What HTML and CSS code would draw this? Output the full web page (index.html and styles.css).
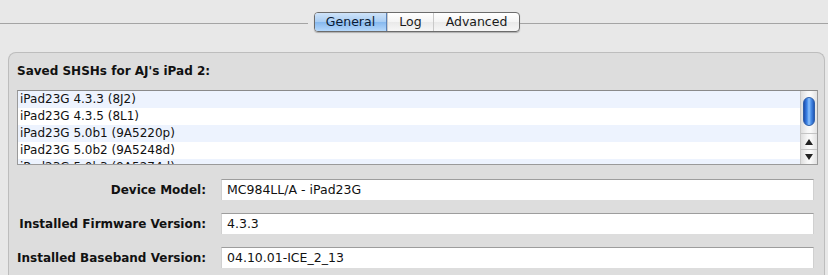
FILE: index.html
```html
<!DOCTYPE html>
<html>
<head>
<meta charset="utf-8">
<link rel="stylesheet" href="styles.css">
</head>
<body>
<div class="window">
  <div class="tabbar">
    <div class="rule"></div>
    <div class="tabs">
      <div class="tab tab-general active">General</div>
      <div class="tab tab-log">Log</div>
      <div class="tab tab-adv">Advanced</div>
    </div>
    <div class="rule"></div>
  </div>
  <div class="panel">
    <div class="title">Saved SHSHs for AJ's iPad 2:</div>
    <div class="list">
      <div class="rows">
        <div class="row odd">iPad23G 4.3.3 (8J2)</div>
        <div class="row">iPad23G 4.3.5 (8L1)</div>
        <div class="row odd">iPad23G 5.0b1 (9A5220p)</div>
        <div class="row">iPad23G 5.0b2 (9A5248d)</div>
        <div class="row odd">iPad23G 5.0b3 (9A5274d)</div>
      </div>
      <div class="scrollbar">
        <div class="track"><div class="thumb"></div></div>
        <div class="arrow up"><span class="tri-up"></span></div>
        <div class="arrow down"><span class="tri-down"></span></div>
      </div>
    </div>
    <div class="fields">
      <div class="label">Device Model:</div>
      <div class="field">MC984LL/A - iPad23G</div>
      <div class="label">Installed Firmware Version:</div>
      <div class="field">4.3.3</div>
      <div class="label">Installed Baseband Version:</div>
      <div class="field">04.10.01-ICE_2_13</div>
    </div>
  </div>
</div>
</body>
</html>
```

FILE: styles.css
```css
html, body {
  margin: 0;
  padding: 0;
  background: #e8e8e8;
  font-family: "DejaVu Sans", "Lucida Grande", sans-serif;
  color: #111;
  overflow: hidden;
}
.window {
  width: 828px;
  height: 275px;
  overflow: hidden;
}
.tabbar {
  display: flex;
  align-items: center;
  height: 20px;
  padding-top: 12px;
  padding-bottom: 20px;
}
.rule {
  flex: 1;
  height: 1px;
  background: #a4a4a4;
  margin-top: 3px;
}
.tabs {
  display: flex;
  height: 18px;
  border: 1px solid #6c6c6c;
  border-radius: 4px;
  background: linear-gradient(#ffffff, #f4f4f4 50%, #e9e9e9 51%, #f6f6f6);
  box-shadow: 0 1px 1px rgba(0,0,0,0.25);
  overflow: hidden;
  margin-left: 6px;
}
.tab {
  font-size: 12.5px;
  line-height: 18px;
  text-align: center;
  color: #1a1a1a;
  border-left: 1px solid #c9c9c9;
}
.tab-general { width: 71px; border-left: none; }
.tab-log { width: 45px; }
.tab-adv { width: 85px; }
.tab.active {
  background: linear-gradient(#cfe3f9, #a8cdf3 50%, #86b8ee 51%, #b5d8fb);
  color: #0a1a33;
  border-right: 1px solid #5a82b8;
}
.panel {
  margin-left: 8px;
  width: 801px;
  height: 212px;
  overflow: hidden;
  border: 1px solid #bdbdbd;
  border-bottom: none;
  border-radius: 8px 8px 0 0;
  background: #dddddd;
  padding: 10px 6px 0 8px;
}
.title {
  font-size: 12px;
  font-weight: bold;
  line-height: 16px;
  height: 16px;
  margin-bottom: 11px;
}
.list {
  display: flex;
  height: 73px;
  border: 1px solid #9a9a9a;
  border-top-color: #8a8a8a;
  background: #fff;
}
.rows {
  flex: 1;
  overflow: hidden;
}
.row {
  height: 17px;
  line-height: 17px;
  font-size: 12px;
  padding-left: 2px;
  white-space: nowrap;
  background: #ffffff;
}
.row.odd {
  background: #edf3fe;
}
.scrollbar {
  width: 16px;
  display: flex;
  flex-direction: column;
  border-left: 1px solid #c8c8c8;
  background: linear-gradient(90deg, #dedede, #f6f6f6 40%, #fafafa 60%, #e2e2e2);
}
.track {
  height: 38px;
  display: flex;
  justify-content: center;
  padding-top: 6px;
}
.thumb {
  width: 12px;
  height: 29px;
  border-radius: 6px;
  border: 1px solid #2f5fa8;
  box-sizing: border-box;
  background: linear-gradient(90deg, #1e4fb0, #3f86e8 30%, #8fc2fb 50%, #4a8fe9 70%, #2258b8);
}
.arrow {
  height: 15px;
  display: flex;
  align-items: center;
  justify-content: center;
  border-top: 1px solid #c4c4c4;
}
.tri-up {
  width: 0; height: 0;
  border-left: 4px solid transparent;
  border-right: 4px solid transparent;
  border-bottom: 6px solid #222;
}
.tri-down {
  width: 0; height: 0;
  border-left: 4px solid transparent;
  border-right: 4px solid transparent;
  border-top: 6px solid #222;
}
.fields {
  display: grid;
  grid-template-columns: 189px 593px;
  column-gap: 15px;
  row-gap: 13px;
  margin-top: 14px;
  align-items: center;
}
.label {
  font-size: 12px;
  font-weight: bold;
  text-align: right;
  white-space: nowrap;
}
.field {
  height: 20px;
  line-height: 20px;
  font-size: 12.5px;
  padding-left: 5px;
  background: #fff;
  border-top: 1px solid #9d9d9d;
  border-left: 1px solid #d0d0d0;
  border-right: 1px solid #d0d0d0;
  box-sizing: content-box;
  white-space: nowrap;
}
```
